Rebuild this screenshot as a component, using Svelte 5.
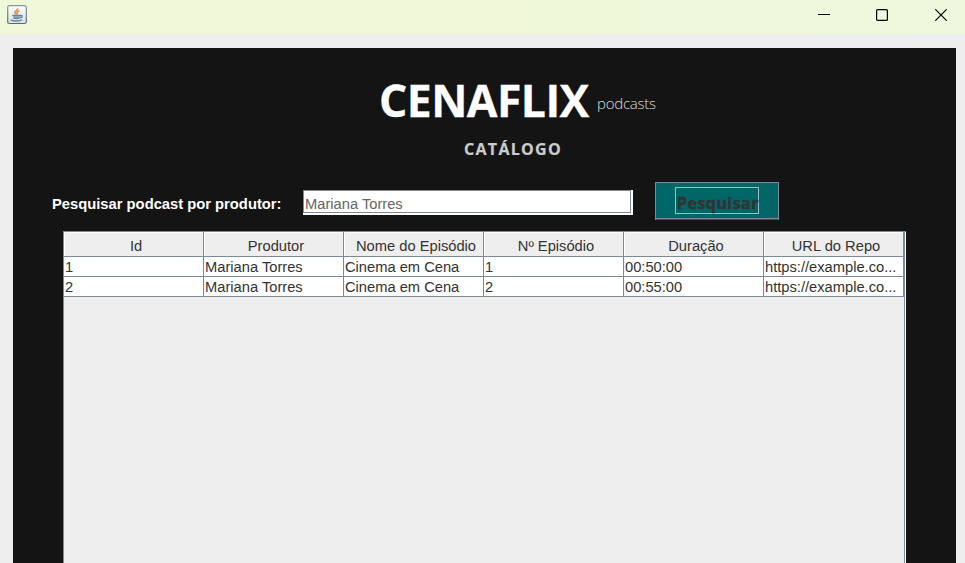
<script>
  const columns = ['Id', 'Produtor', 'Nome do Episódio', 'Nº Episódio', 'Duração', 'URL do Repo'];
  const rows = [
    ['1', 'Mariana Torres', 'Cinema em Cena', '1', '00:50:00', 'https://example.co...'],
    ['2', 'Mariana Torres', 'Cinema em Cena', '2', '00:55:00', 'https://example.co...']
  ];
  let query = $state('Mariana Torres');
</script>

<div class="window">
  <header class="titlebar">
    <svg class="java" width="20" height="20" viewBox="0 0 20 20">
      <defs>
        <linearGradient id="tile" x1="0" y1="0" x2="0" y2="1">
          <stop offset="0" stop-color="#fff" />
          <stop offset="1" stop-color="#dcdfe3" />
        </linearGradient>
        <linearGradient id="edge" x1="0" y1="0" x2="0" y2="1">
          <stop offset="0" stop-color="#8797a5" />
          <stop offset="1" stop-color="#526b7d" />
        </linearGradient>
      </defs>
      <rect x=".7" y=".7" width="18.6" height="17.8" rx="1.8" fill="url(#tile)" stroke="url(#edge)" stroke-width="1.2" />
      <path d="M10.600 3.300c.9 1.900-3.400 2.500-2.700 4.600.3.800 1.300 1 1.200 1.900M12.300 5.900c-1.500.4-2.600 1.100-2.100 2 .3.600.3 1-.2 1.700" fill="none" stroke="#e8944e" stroke-width="1.700" />
      <path d="M5.500 10.400h8.200v2.200c-2 1.300-5.500 1.200-7.400 0z" fill="#8ba6bb" />
      <path d="M5.300 10.300h8.500M6.300 12.900c1.800.7 4.600.7 6.400 0M13.500 10.300c2.600-.3 2.200 2.200-.3 2.500M3.800 14.900c2.500 1.500 9 1.500 11.400-.1" fill="none" stroke="#6589a5" stroke-width="1.300" />
    </svg>
    <div class="controls">
      <svg width="12" height="12" viewBox="0 0 12 12"><path d="M0 5.500h12" stroke="#000" /></svg>
      <svg width="12" height="12" viewBox="0 0 12 12"><rect x=".6" y=".6" width="10.800" height="10.800" rx="1" fill="none" stroke="#000" stroke-width="1.200" /></svg>
      <svg width="12" height="12" viewBox="0 0 12 12"><path d="M.3.3l11.400 11.400M11.700.3L.3 11.700" stroke="#000" stroke-width="1.200" /></svg>
    </div>
  </header>

  <main>
    <div class="brand"><h1>CENAFLIX</h1><span>podcasts</span></div>
    <h2>CATÁLOGO</h2>
    <div class="search">
      <label for="producer">Pesquisar podcast por produtor:</label>
      <div class="field"><input id="producer" bind:value={query} /></div>
      <button><span>Pesquisar</span></button>
    </div>
    <div class="scroll">
      <div class="grid head">
        {#each columns as name}<div>{name}</div>{/each}
      </div>
      {#each rows as row}
        <div class="grid row">
          {#each row as cell}<div>{cell}</div>{/each}
        </div>
      {/each}
    </div>
  </main>
</div>

<style>
  :global(body) { overflow: hidden; }
  .window {
    box-sizing: border-box; width: 965px; height: 563px; overflow: hidden;
    display: flex; flex-direction: column; background: #eee;
    font-family: 'Liberation Sans', Arial, sans-serif;
  }
  .titlebar {
    height: 34px; flex: none; box-sizing: border-box; padding: 5px 18px 0 7px;
    display: flex; justify-content: space-between; background: linear-gradient(90deg, #f0f8da, #f1f8d9 35%, #eef8dc);
  }
  .controls { display: flex; gap: 46px; padding-top: 4px; }
  .controls svg:last-child { margin-left: 1px; }
  svg { display: block; }
  main {
    flex: 1; min-height: 0; margin: 14px 9px 0 13px; background: #141414;
    display: flex; flex-direction: column;
  }
  .brand { height: 84px; flex: none; display: flex; align-items: flex-start; padding: 20px 0 0 366px; box-sizing: border-box; }
  h1, h2 { margin: 0; font-family: 'Open Sans', 'Noto Sans', sans-serif; white-space: nowrap; }
  h1 { color: #fff; font-size: 44.500px; line-height: 63px; font-weight: 700; width: 218px; letter-spacing: -.55px; -webkit-text-stroke: .3px #fff; }
  .brand span { font: 300 15px/20px 'Open Sans', sans-serif; color: #ddd; letter-spacing: -.25px; padding-top: 25px; }
  h2 { height: 50px; flex: none; padding-left: 451px; box-sizing: border-box; color: #ccc; font-size: 16px; line-height: 34px; letter-spacing: 1.3px; -webkit-text-stroke: .2px #ccc; }
  .search { height: 38px; flex: none; display: flex; align-items: flex-start; padding-left: 39px; }
  label { width: 251px; flex: none; color: #fff; font-size: 14.750px; font-weight: 700; line-height: 44px; white-space: nowrap; }
  .field { margin-top: 8px; width: 330px; height: 25px; box-sizing: border-box; background: #fff; }
  input {
    display: block; width: 328px; height: 23px; box-sizing: border-box; border: 1px solid #7a8a99;
    padding: 4px 0 0 1px; margin: 0; outline: 0; background: #fff; color: #666;
    font: 14.700px 'Liberation Sans', Arial, sans-serif;
  }
  button {
    margin: 0 0 0 22px; width: 124px; height: 38px; box-sizing: border-box; border: 1px solid #7a8a99;
    border-bottom: 0; box-shadow: inset 0 -1px #006666, inset 0 -2px #7a8a99;
    border-radius: 0; background: #066; padding: 4px 19px 0; color: #333;
    font: 700 16px 'Open Sans', sans-serif; display: flex; align-items: flex-start;
  }
  button span { display: block; box-sizing: border-box; width: 84px; height: 27px; border: 1px solid #a3b8cc; line-height: 30px; padding-left: 1px; text-align: left; letter-spacing: .45px; -webkit-text-stroke: .35px #333; white-space: nowrap; }
  .scroll {
    flex: 1; min-height: 0; margin: 11px 0 0 50px; width: 843px; box-sizing: border-box;
    border: solid #7a8a99; border-width: 1px 0 0 1px; background: #eee;
    box-shadow: inset -1px 0 #fff, inset -2px 0 #7a8a99;
  }
  .grid { display: grid; grid-template-columns: repeat(6, 140px); font-size: 14.700px; color: #333; }
  .grid div { box-sizing: border-box; border: solid #7a8a99; border-width: 0 1px 1px 0; white-space: nowrap; overflow: hidden; }
  .head div { height: 25px; line-height: 28px; text-align: center; padding-left: 5px; box-shadow: inset 1px 1px #fff; background: #eee; }
  .row div { height: 20px; line-height: 20px; padding-left: 1px; background: #fff; }
</style>
